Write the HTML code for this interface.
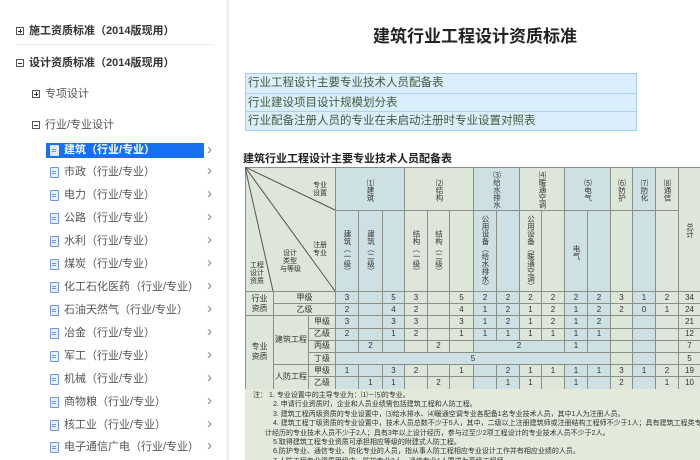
<!DOCTYPE html>
<html><head><meta charset="utf-8"><style>
*{margin:0;padding:0;box-sizing:border-box}
body{width:700px;height:460px;overflow:hidden;background:#fff;font-family:"Liberation Sans","Noto Sans CJK SC",sans-serif;position:relative}
.a{position:absolute;white-space:nowrap}
.side{position:absolute;left:0;top:0;width:229px;height:460px;background:#fff;border-right:3px solid #eef0f3}
.h{font-size:11px;font-weight:bold;color:#333}
.box{display:inline-block;width:8px;height:8px;border:1px solid #555;position:relative;vertical-align:middle;margin-right:5px}
.box:before{content:"";position:absolute;left:1px;top:2.5px;width:4px;height:1px;background:#333}
.box.p:after{content:"";position:absolute;left:2.5px;top:1px;width:1px;height:4px;background:#333}
.it{position:absolute;left:46px;width:160px;height:15px;font-size:11px;color:#555;line-height:15px}
.it .ic{position:absolute;left:4px;top:2px;width:9px;height:11px;background:#e8efff;border:1.5px solid #6f96e8;border-radius:1px}
.it .ic:after{content:"";position:absolute;left:1px;top:3px;width:4px;height:1px;background:#6f96e8;box-shadow:0 2px 0 #6f96e8}
.it span{position:absolute;left:18px}
.ar{position:absolute;left:161px;top:-2px;color:#888;font-size:15px;font-weight:normal}
.sel{background:#1670f0;color:#fff;font-weight:bold;width:158px}
.sel .ic{background:#dfe9ff;border-color:#dfe9ff}
.links{position:absolute;left:245px;top:73px;width:392px;border:1px solid #9ccff5;background:#dcedfd}
.links div{height:18.5px;line-height:18px;font-size:11.5px;color:#3f5f3a;padding-left:2px;border-top:1px solid #a8d4f5}
.links div:first-child{border-top:none}
table{position:absolute;left:245px;top:167px;border-collapse:collapse;table-layout:fixed;width:455px;font-size:8px;color:#333}
td{border:1px solid #8a8f88;text-align:center;padding:0;overflow:hidden;background:#dde6d8}
.b{background:#cde0e4}
td.v{vertical-align:top}
.v div{writing-mode:vertical-rl;text-orientation:upright;font-family:"Noto Sans CJK SC",sans-serif;font-size:7.5px;line-height:8px;margin:2px auto 0;overflow:hidden}
tr.h1 td{height:43px}
tr.h1 .v div{height:40px}
tr.h2 td{height:81px}
tr.h2 .v div{height:78px}
tr.r td{height:12.2px;line-height:10px}
.notes{position:absolute;left:245px;top:389px;width:455px;height:71px;background:#e3eadc;font-size:7px;color:#333;line-height:9.4px;padding:2px 0 0 8px;overflow:hidden}
</style></head><body>
<div class="side">
<div class="a h" style="left:16px;top:22px"><span class="box p"></span>施工资质标准（2014版现用）</div>
<div class="a" style="left:16px;top:44px;width:198px;height:1px;background:#eceef0"></div>
<div class="a h" style="left:16px;top:54px"><span class="box"></span>设计资质标准（2014版现用）</div>
<div class="a" style="left:32px;top:85px;font-size:11px;color:#555"><span class="box p"></span>专项设计</div>
<div class="a" style="left:32px;top:116px;font-size:11px;color:#555"><span class="box"></span>行业/专业设计</div>
<div class="it sel" style="top:143px"><i class="ic"></i><span>建筑（行业/专业）</span></div><div class="a" style="left:207px;top:141px;color:#888;font-size:15px">›</div>
<div class="it" style="top:165px"><i class="ic"></i><span>市政（行业/专业）</span><b class="ar">›</b></div>
<div class="it" style="top:188px"><i class="ic"></i><span>电力（行业/专业）</span><b class="ar">›</b></div>
<div class="it" style="top:211px"><i class="ic"></i><span>公路（行业/专业）</span><b class="ar">›</b></div>
<div class="it" style="top:234px"><i class="ic"></i><span>水利（行业/专业）</span><b class="ar">›</b></div>
<div class="it" style="top:257px"><i class="ic"></i><span>煤炭（行业/专业）</span><b class="ar">›</b></div>
<div class="it" style="top:280px"><i class="ic"></i><span>化工石化医药（行业/专业）</span><b class="ar">›</b></div>
<div class="it" style="top:303px"><i class="ic"></i><span>石油天然气（行业/专业）</span><b class="ar">›</b></div>
<div class="it" style="top:326px"><i class="ic"></i><span>冶金（行业/专业）</span><b class="ar">›</b></div>
<div class="it" style="top:349px"><i class="ic"></i><span>军工（行业/专业）</span><b class="ar">›</b></div>
<div class="it" style="top:372px"><i class="ic"></i><span>机械（行业/专业）</span><b class="ar">›</b></div>
<div class="it" style="top:395px"><i class="ic"></i><span>商物粮（行业/专业）</span><b class="ar">›</b></div>
<div class="it" style="top:418px"><i class="ic"></i><span>核工业（行业/专业）</span><b class="ar">›</b></div>
<div class="it" style="top:440px"><i class="ic"></i><span>电子通信广电（行业/专业）</span><b class="ar">›</b></div>
</div>
<div class="a" style="left:373px;top:22px;font-size:17px;font-weight:bold;color:#222">建筑行业工程设计资质标准</div>
<div class="links"><div>行业工程设计主要专业技术人员配备表</div><div>行业建设项目设计规模划分表</div><div>行业配备注册人员的专业在未启动注册时专业设置对照表</div></div>
<div class="a" style="left:243px;top:150px;font-size:11px;font-weight:bold;color:#222">建筑行业工程设计主要专业技术人员配备表</div>
<table>
<colgroup><col style="width:28px"><col style="width:35px"><col style="width:27px"><col style="width:23px"><col style="width:24px"><col style="width:22px"><col style="width:23px"><col style="width:22px"><col style="width:24px"><col style="width:23px"><col style="width:23px"><col style="width:22px"><col style="width:23px"><col style="width:23px"><col style="width:23px"><col style="width:22px"><col style="width:23px"><col style="width:23px"><col style="width:22px"></colgroup>
<tr class="h1"><td colspan="3" rowspan="2"></td>
<td colspan="3" class="b v"><div>⑴建筑</div></td><td colspan="3" class="v"><div>⑵结构</div></td><td colspan="2" class="b v"><div>⑶给水排水</div></td><td colspan="2" class="v"><div>⑷暖通空调</div></td><td colspan="2" class="b v"><div>⑸电气</div></td><td class="v"><div>⑹防护</div></td><td class="b v"><div>⑺防化</div></td><td class="v"><div>⑻通信</div></td><td rowspan="2" class="v" style="vertical-align:middle"><div>总计</div></td></tr>
<tr class="h2"><td class="b v"><div>建筑（一级）</div></td><td class="b v"><div>建筑（二级）</div></td><td class="b"></td><td class="v"><div>结构（一级）</div></td><td class="v"><div>结构（二级）</div></td><td></td><td class="b v"><div>公用设备（给水排水）</div></td><td class="b"></td><td class="v"><div>公用设备（暖通空调）</div></td><td></td><td class="b v"><div>电气</div></td><td class="b"></td><td></td><td class="b"></td><td></td></tr>
<tr class="r"><td rowspan="2">行业<br>资质</td><td colspan="2">甲级</td><td class="b">3</td><td class="b"></td><td class="b">5</td><td>3</td><td></td><td>5</td><td class="b">2</td><td class="b">2</td><td>2</td><td>2</td><td class="b">2</td><td class="b">2</td><td>3</td><td class="b">1</td><td>2</td><td>34</td></tr>
<tr class="r"><td colspan="2">乙级</td><td class="b">2</td><td class="b"></td><td class="b">4</td><td>2</td><td></td><td>4</td><td class="b">1</td><td class="b">2</td><td>1</td><td>2</td><td class="b">1</td><td class="b">2</td><td>2</td><td class="b">0</td><td>1</td><td>24</td></tr>
<tr class="r"><td rowspan="6">专业<br>资质</td><td rowspan="4">建筑工程</td><td>甲级</td><td class="b">3</td><td class="b"></td><td class="b">3</td><td>3</td><td></td><td>3</td><td class="b">1</td><td class="b">2</td><td>1</td><td>2</td><td class="b">1</td><td class="b">2</td><td></td><td class="b"></td><td></td><td>21</td></tr>
<tr class="r"><td>乙级</td><td class="b">2</td><td class="b"></td><td class="b">1</td><td>2</td><td></td><td>1</td><td class="b">1</td><td class="b">1</td><td>1</td><td>1</td><td class="b">1</td><td class="b">1</td><td></td><td class="b"></td><td></td><td>12</td></tr>
<tr class="r"><td>丙级</td><td class="b"></td><td class="b">2</td><td class="b"></td><td></td><td>2</td><td></td><td colspan="4" class="b">2</td><td class="b">1</td><td class="b"></td><td></td><td class="b"></td><td></td><td>7</td></tr>
<tr class="r"><td>丁级</td><td colspan="12" class="b">5</td><td></td><td class="b"></td><td></td><td>5</td></tr>
<tr class="r"><td rowspan="2">人防工程</td><td>甲级</td><td class="b">1</td><td class="b"></td><td class="b">3</td><td>2</td><td></td><td>1</td><td class="b"></td><td class="b">2</td><td>1</td><td>1</td><td class="b">1</td><td class="b">1</td><td>3</td><td class="b">1</td><td>2</td><td>19</td></tr>
<tr class="r"><td>乙级</td><td class="b"></td><td class="b">1</td><td class="b">1</td><td></td><td>2</td><td></td><td class="b"></td><td class="b">1</td><td>1</td><td></td><td class="b">1</td><td class="b"></td><td>2</td><td class="b"></td><td>1</td><td>10</td></tr>
</table>
<svg class="a" style="left:245px;top:167px" width="91" height="125"><g stroke="#555" stroke-width="1" fill="none"><line x1="0" y1="0" x2="90" y2="43"/><line x1="0" y1="0" x2="90" y2="124"/><line x1="0" y1="0" x2="28" y2="124"/></g>
<g font-size="7" fill="#333" font-family="Noto Sans CJK SC,sans-serif"><text x="68" y="20">专业</text><text x="68" y="28">设置</text><text x="68" y="80">注册</text><text x="68" y="88">专业</text><text x="38" y="88">设计</text><text x="38" y="96">类型</text><text x="35" y="104">与等级</text><text x="5" y="100">工程</text><text x="5" y="108">设计</text><text x="5" y="116">资质</text></g></svg>
<div class="notes">
<div>注： 1. 专业设置中的主导专业为：⑴－⑸的专业。</div>
<div style="padding-left:20px">2. 申请行业资质时，企业和人员业绩需包括建筑工程和人防工程。</div>
<div style="padding-left:20px">3. 建筑工程丙级资质的专业设置中，⑶给水排水、⑷暖通空调专业各配备1名专业技术人员，其中1人为注册人员。</div>
<div style="padding-left:20px;white-space:nowrap;overflow:hidden">4. 建筑工程丁级资质的专业设置中，技术人员总数不少于5人，其中，二级以上注册建筑师或注册结构工程师不少于1人；具有建筑工程类专业学历、2年以上设</div>
<div style="padding-left:12px">计经历的专业技术人员不少于2人；具有3年以上设计经历，参与过至少2项工程设计的专业技术人员不少于2人。</div>
<div style="padding-left:20px">5.取得建筑工程专业资质可承担相应等级的附建式人防工程。</div>
<div style="padding-left:20px">6.防护专业、通信专业、防化专业的人员，指从事人防工程相应专业设计工作并有相应业绩的人员。</div>
<div style="padding-left:20px">7.人防工程专业资质甲级中，防护专业3人、通信专业1人要求为高级工程师。</div>
</div>
</body></html>
